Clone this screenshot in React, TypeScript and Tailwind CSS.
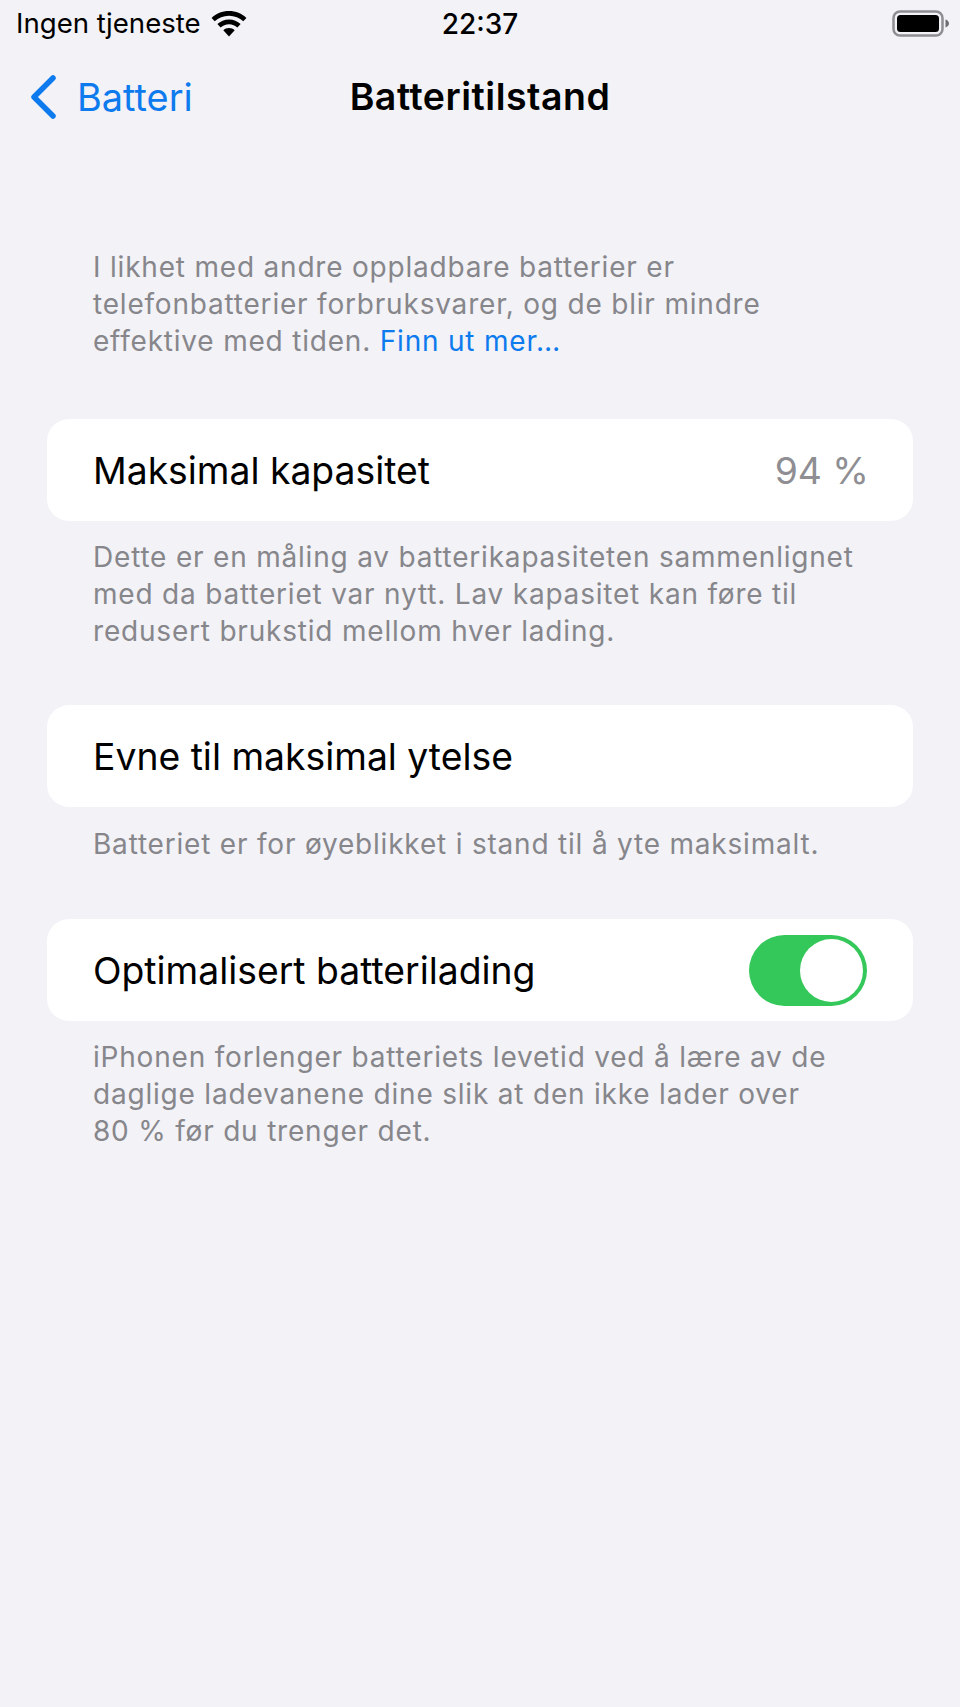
const font = { fontFamily: "Inter, 'Liberation Sans', sans-serif" };

function Wifi() {
  return (
    <svg width="36" height="26" viewBox="0 0 36 26" fill="#000">
      <path d="M18 0C11.2 0 5.2 2.6.6 6.9l3.1 3.4C7.4 6.8 12.4 4.7 18 4.7s10.6 2.1 14.3 5.6l3.1-3.4C30.8 2.6 24.800 0 18 0z" />
      <path d="M18 8.500c-4.500 0-8.500 1.700-11.600 4.600l3.200 3.400c2.200-2 5.100-3.300 8.400-3.300s6.200 1.300 8.400 3.300l3.200-3.400C26.500 10.200 22.500 8.500 18 8.500z" />
      <path d="M18 17c-2.300 0-4.200.8-5.700 2.200L18 25.500l5.700-6.300C22.200 17.800 20.300 17 18 17z" />
    </svg>
  );
}

function Battery() {
  return (
    <svg width="58" height="28" viewBox="0 0 58 28">
      <rect x="1.500" y="1.500" width="49" height="24" rx="6.500" fill="none" stroke="#8e8e93" strokeWidth="2.500" />
      <rect x="5" y="5" width="42" height="17" rx="3.500" fill="#000" />
      <path d="M53.500 9.500c2 .6 3.500 2.200 3.500 4s-1.500 3.400-3.500 4z" fill="#6e6e73" />
    </svg>
  );
}

function Caption({ children }: { children: React.ReactNode }) {
  return (
    <p className="pl-[93px] text-[28px] leading-[37px] tracking-[0.8px] text-[#86868b] whitespace-nowrap">{children}</p>
  );
}

function Row({ children }: { children: React.ReactNode }) {
  return (
    <div className="ml-[46.500px] mr-[47px] h-[102px] pt-[1px] rounded-[22px] bg-white pl-[46.500px] pr-[46px] flex items-center justify-between text-[37.300px] text-black">
      {children}
    </div>
  );
}

export default function App() {
  return (
    <div className="w-[960px] h-[1707px] bg-[#f2f2f7] overflow-hidden" style={font}>
      {/* status bar */}
      <div className="h-[48px] pl-4 pr-[10px] flex items-center justify-between relative">
        <div className="flex items-center gap-[10px] text-[27.600px] text-black">
          <span>Ingen tjeneste</span>
          <Wifi />
        </div>
        <span className="absolute left-0 right-0 text-center text-[28px] font-medium text-black">22:37</span>
        <Battery />
      </div>

      {/* nav */}
      <div className="h-[98px] relative flex items-center pl-[30px]">
        <svg width="26" height="44" viewBox="0 0 26 44" fill="none" stroke="#0d7aee" strokeWidth="5.500" strokeLinecap="round" strokeLinejoin="round">
          <path d="M23 3 4 22l19 19" />
        </svg>
        <span className="ml-[21px] text-[37.900px] text-[#0d7aee]">Batteri</span>
        <span className="absolute left-0 right-0 text-center text-[37.500px] font-semibold tracking-[0.5px] text-black">Batteritilstand</span>
      </div>

      <div className="pt-[103px]">
        <Caption>
          I likhet med andre oppladbare batterier er
          <br />
          telefonbatterier forbruksvarer, og de blir mindre
          <br />
          effektive med tiden. <span className="text-[#0d7aee]">Finn ut mer…</span>
        </Caption>
      </div>

      <div className="mt-[59px]">
        <Row>
          <span>Maksimal kapasitet</span>
          <span className="-mr-[2px] text-[#8e8e93]">94 %</span>
        </Row>
      </div>
      <div className="mt-[18px]">
        <Caption>
          Dette er en måling av batterikapasiteten sammenlignet
          <br />
          med da batteriet var nytt. Lav kapasitet kan føre til
          <br />
          redusert brukstid mellom hver lading.
        </Caption>
      </div>

      <div className="mt-[55px]">
        <Row>
          <span>Evne til maksimal ytelse</span>
        </Row>
      </div>
      <div className="mt-[19px]">
        <Caption>Batteriet er for øyeblikket i stand til å yte maksimalt.</Caption>
      </div>

      <div className="mt-[56px]">
        <Row>
          <span>Optimalisert batterilading</span>
          <div className="w-[118px] h-[71px] -mt-[1px] rounded-full bg-[#34c759] flex items-center justify-end pr-[4px]">
            <div className="w-[63px] h-[63px] rounded-full bg-white" />
          </div>
        </Row>
      </div>
      <div className="mt-[18px]">
        <Caption>
          iPhonen forlenger batteriets levetid ved å lære av de
          <br />
          daglige ladevanene dine slik at den ikke lader over
          <br />
          80 % før du trenger det.
        </Caption>
      </div>
    </div>
  );
}
